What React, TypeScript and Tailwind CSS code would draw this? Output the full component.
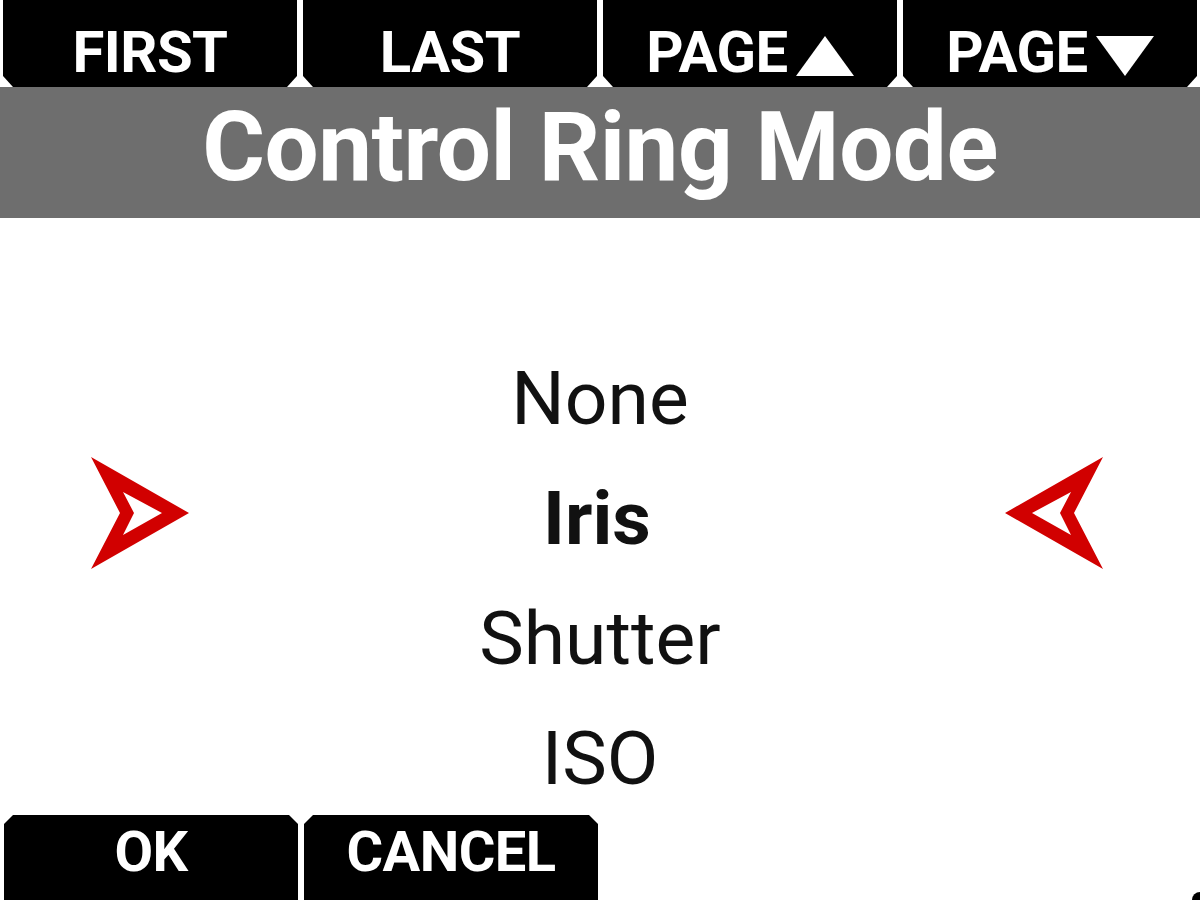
import React from 'react';

const topButtons = ['FIRST', 'LAST', 'PAGE ▲', 'PAGE ▼'];
const options = ['None', 'Iris', 'Shutter', 'ISO'];
const selected = 'Iris';

// red outline chevron, pointing right; mirrored for the right side
const Pointer: React.FC<{ flip?: boolean }> = ({ flip }) => (
  <svg width="100" height="112" viewBox="0 0 100 112" className={`mb-[10px] shrink-0 ${flip ? 'mr-[6px]' : ''}`}>
    <g transform={flip ? 'translate(100 0) scale(-1 1)' : undefined}>
      <path
        d="M1 0 L99 56 L1 112 L30 56 Z M33 35 L44 56 L33 78 L72 56 Z"
        fill="#d10000"
        fillRule="evenodd"
      />
    </g>
  </svg>
);

const TopButton: React.FC<{ label: string }> = ({ label }) => {
  const arrow = label.endsWith('▲') ? 'up' : label.endsWith('▼') ? 'down' : null;
  const text = arrow ? label.slice(0, -2) : label;
  return (
    <div className="flex-1 h-full bg-black flex items-start justify-center pt-[23px] [clip-path:polygon(0_0,100%_0,100%_calc(100%_-_11px),calc(100%_-_10px)_100%,10px_100%,0_calc(100%_-_11px))]">
      <span className="text-white font-bold text-[58px] leading-none tracking-[-0.5px]">{text}</span>
      {arrow && (
        <svg width="58" height="40" viewBox="0 0 58 40" className="ml-[8px] mt-[13px]">
          {arrow === 'up' ? <path d="M29 0 L58 40 L0 40 Z" fill="#fff" /> : <path d="M0 0 L58 0 L29 40 Z" fill="#fff" />}
        </svg>
      )}
    </div>
  );
};

const BottomButton: React.FC<{ label: string }> = ({ label }) => (
  <div className="w-[294px] h-full bg-black flex items-start justify-center pt-[9px] [clip-path:polygon(0_9px,9px_0,calc(100%_-_9px)_0,100%_9px,100%_100%,0_100%)]">
    <span className="text-white font-bold text-[56px] leading-none tracking-[-0.5px]">{label}</span>
  </div>
);

export default function App() {
  return (
    <div className="w-[1200px] h-[900px] bg-white flex flex-col overflow-hidden font-['Roboto','Liberation_Sans',sans-serif]">
      {/* soft keys, top */}
      <div className="h-[87px] flex gap-[6px] px-[3px] bg-white shrink-0">
        {topButtons.map((b) => (
          <TopButton key={b} label={b} />
        ))}
      </div>

      {/* title */}
      <div className="h-[131px] bg-[#6e6e6e] flex justify-center pt-[12px] shrink-0">
        <h1 className="text-white font-bold text-[96px] leading-none tracking-[-0.5px]">Control Ring Mode</h1>
      </div>

      {/* list */}
      <div className="flex-1 min-h-0 flex flex-col pt-[120px]">
        {options.map((o) => (
          <div key={o} className="h-[120px] shrink-0 flex items-center justify-between px-[90px]">
            {o === selected ? <Pointer /> : <div className="w-[100px]" />}
            <span className={`flex-1 text-center text-[75px] leading-[120px] text-[#111] ${o === selected ? 'font-bold' : 'font-normal'}`}>
              {o}
            </span>
            {o === selected ? <Pointer flip /> : <div className="w-[100px]" />}
          </div>
        ))}
      </div>

      {/* soft keys, bottom */}
      <div className="h-[85px] flex gap-[6px] pl-[4px] shrink-0 relative z-10">
        <BottomButton label="OK" />
        <BottomButton label="CANCEL" />
        <div className="flex-1" />
        <div className="w-[8px] h-[8px] self-end bg-black rounded-tl-full" />
      </div>
    </div>
  );
}
